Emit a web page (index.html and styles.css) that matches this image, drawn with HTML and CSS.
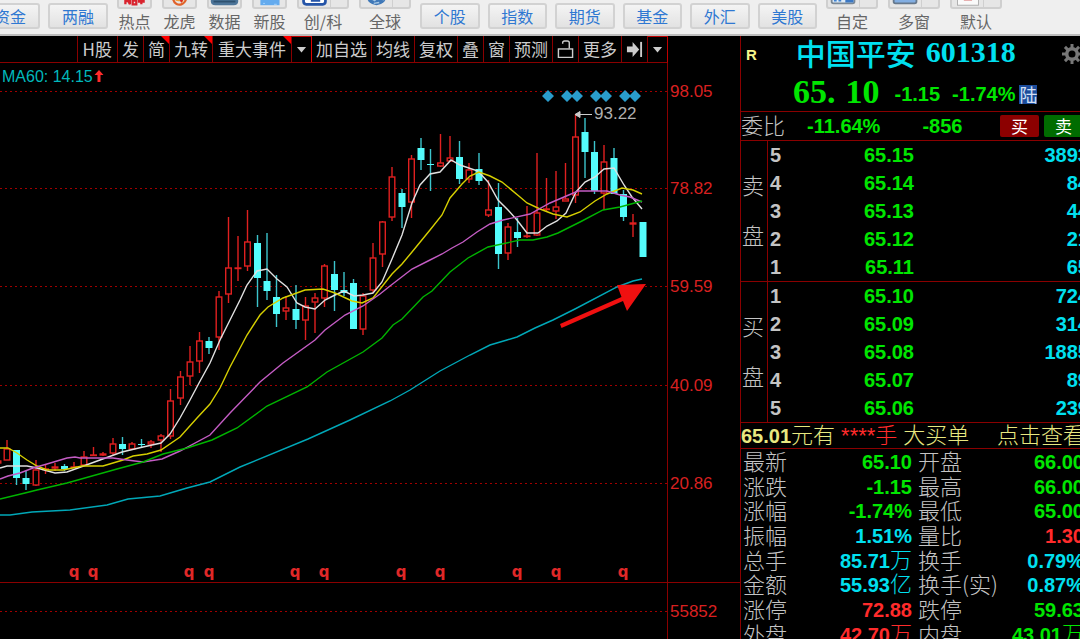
FILE: index.html
```html
<!DOCTYPE html>
<html lang="zh-CN">
<head>
<meta charset="utf-8">
<title>中国平安 601318</title>
<link rel="stylesheet" href="styles.css">
</head>
<body>
<header class="toolbar">
  <div class="group group-start">
    <button class="box-btn">资金</button>
    <button class="box-btn">两融</button>
  </div>
  <div class="group icons">
    <button class="tool"><span class="tile"><svg viewBox="0 0 34 24"><path d="M7 13v7M7 16.500h4M12 13v7l-2-4M15 13v7h4v-7h-4v3h4M22 13v4h5v-4M24.500 13v7" fill="none" stroke="#d9232e" stroke-width="2.500"/></svg></span>热点</button>
    <button class="tool"><span class="tile"><svg viewBox="0 0 34 24"><path d="M10 14c1 6 6 7 9 6s5-4 5-6" fill="none" stroke="#e0622a" stroke-width="2.500"/><path d="M13 15c3 2 5-1 8 2" fill="none" stroke="#f2a03a" stroke-width="2"/><path d="M17 13l2 4 2-3" fill="none" stroke="#d62828" stroke-width="1.500"/></svg></span>龙虎</button>
    <button class="tool"><span class="tile"><svg viewBox="0 0 34 24"><path d="M2 14h30v3q0 4-5 4H7q-5 0-5-4z" fill="#4d7599"/><path d="M5 17h24" stroke="#2f5270" stroke-width="2"/></svg></span>数据</button>
    <button class="tool"><span class="tile"><svg viewBox="0 0 34 24"><rect x="7" y="4" width="21" height="17" fill="#64abee"/><path d="M10 19h2M22 20h3" stroke="#a7d5ff"/></svg></span>新股</button>
    <button class="tool"><span class="tile split"><svg viewBox="0 0 34 24"><rect x="5" y="4" width="24" height="16" rx="3" fill="#fff" stroke="#2454a8" stroke-width="3"/><path d="M13 16h9v-4" fill="none" stroke="#2454a8" stroke-width="2.500"/></svg></span>创/科</button>
    <button class="tool"><span class="tile split"><svg viewBox="0 0 34 24"><circle cx="17" cy="10" r="11" fill="#3f78b8"/><path d="M10 13l5 3 3-3 7 2M14 19l6-1" fill="none" stroke="#a8c8e4" stroke-width="1.500"/></svg></span>全球</button>
  </div>
  <div class="group boxes">
    <button class="box-btn">个股</button>
    <button class="box-btn">指数</button>
    <button class="box-btn">期货</button>
    <button class="box-btn">基金</button>
    <button class="box-btn">外汇</button>
    <button class="box-btn">美股</button>
  </div>
  <div class="group icons">
    <button class="tool"><span class="tile split"><svg viewBox="0 0 34 24"><rect x="4" y="4" width="25" height="15" rx="2" fill="#dceaf7" stroke="#7a8794" stroke-width="2"/><path d="M8 17v-4M13 17v-2" stroke="#3f82d0" stroke-width="3"/><rect x="19" y="10" width="9" height="8" fill="#3b78c4"/></svg></span>自定</button>
    <button class="tool"><span class="tile split"><svg viewBox="0 0 34 24"><rect x="4" y="4" width="25" height="15" rx="2" fill="#82aee2" stroke="#66788c" stroke-width="2"/></svg></span>多窗</button>
    <button class="tool"><span class="tile split"><svg viewBox="0 0 34 24"><rect x="6" y="2" width="23" height="19" fill="#fafafa" stroke="#aaa"/><path d="M13 15h9" stroke="#d88" stroke-width="2"/></svg></span>默认</button>
  </div>
</header>

<main class="workspace">
  <section class="chart-pane">
    <nav class="menu">
      <button class="roomy">H股</button>
      <button>发</button>
      <button class="flag">简</button>
      <button class="flag">九转</button>
      <button class="flag roomy">重大事件</button>
      <button class="drop" aria-label="更多事件"><svg viewBox="0 0 12 8"><path d="M1 1h10l-5 6z"/></svg></button>
      <button class="after-drop">加自选</button>
      <button>均线</button>
      <button>复权</button>
      <button>叠</button>
      <button>窗</button>
      <button>预测</button>
      <button class="glyph" aria-label="解锁"><svg viewBox="0 0 18 20"><rect x="1.500" y="9.500" width="15" height="9" fill="none" stroke="#ccc" stroke-width="1.500"/><path d="M6 4V3q0-2 2-2h3q2 0 2 2v6" fill="none" stroke="#ccc" stroke-width="1.500"/></svg></button>
      <button>更多</button>
      <button class="glyph" aria-label="跳到最新"><svg viewBox="0 0 18 20"><path d="M1 7h6V2l7 8-7 8v-5H1z"/><path d="M15 2h2v16h-2z"/></svg></button>
      <button class="drop" aria-label="菜单"><svg viewBox="0 0 12 8"><path d="M1 1h10l-5 6z"/></svg></button>
    </nav>
    <svg class="chart" viewBox="0 63 740 576" role="img" aria-label="日K线图">
      <path class="grid" d="M0 91.500H667M0 188.500H667M0 286.500H667M0 385.500H667M0 483.500H667M0 611.500H667"/>
      <path class="frame" d="M0 582.500H740M667.500 63V639"/>
      <g id="candles"></g>
      <polyline class="ma ma5" points="0,468 7,466 27,466 37,468 55,473 67,472 78,468 100,460 122,452 143,447 161,443 170,434 180,418 190,400 199,383 210,363 220,340 230,320 240,300 247,285 257,271 267,269 277,279 287,287 297,303 305,307 315,309 325,300 335,295 344,291 354,296 363,295 373,293 382,282 392,259 402,235 412,203 420,185 430,174 440,172 451,160 460,165 478,171 488,182 498,200 508,210 517,220 527,233 538,233 547,226 557,221 566,213 576,192 585,182 595,177 604,169 614,168 624,185 632,197 642,209"/>
      <polyline class="ma ma10" points="0,448 8,448 17,453 27,460 37,466 47,470 63,470 82,466 103,466 123,460 133,456 147,454 161,450 180,437 197,418 210,404 220,388 230,367 247,335 260,315 268,307 283,298 305,290 323,289 335,293 352,301 362,303 373,298 392,274 402,264 412,252 430,230 442,215 450,198 462,184 470,176 479,172 490,176 502,182 520,197 527,203 540,209 553,214 567,217 580,212 595,201 607,194 622,188 633,190 642,194"/>
      <polyline class="ma ma20" points="0,479 8,476 20,473 33,468 47,464 67,458 75,457 80,458 113,458 127,460 143,462 162,459 180,451 210,435 230,413 260,382 283,363 315,340 325,330 345,315 363,306 380,294 390,286 412,269 430,260 442,254 452,248 463,242 477,232 490,224 503,220 530,214 550,203 578,191 607,191 620,195 630,197 642,202"/>
      <polyline class="ma ma30" points="0,499 25,493 37,490 67,483 117,469 143,462 163,454 187,448 212,440 237,428 267,406 307,387 327,372 363,352 382,338 393,325 402,319 423,297 432,291 450,272 468,258 488,247 520,240 533,240 547,237 558,233 580,222 603,210 620,207 642,201"/>
      <polyline class="ma ma60" points="0,515 10,515 32,512 70,510 107,505 128,499 160,496 187,488 210,482 240,467 308,439 350,420 390,401 410,390 440,371 470,355 490,345 507,340 517,337 535,328 553,320 575,309 617,287 633,281 642,279"/>
      <path class="diamonds" d="M542 96l6-6 6 6-6 6zM561 96l6-6 5 5 5-5 6 6-6 6-5-5-5 5zM590 96l6-6 5 5 5-5 6 6-6 6-5-5-5 5zM619 96l6-6 5 5 5-5 6 6-6 6-5-5-5 5z"/>
      <path class="peak" d="M576 114.500h16M575 114.500l5-3v6z"/>
      <path class="arrow" d="M560 324l61.500-27-4.500-12 29-1-19 27-4-10-61.500 27z"/>
      <text class="num peak-label" x="594" y="119">93.22</text>
      <text class="num ma-label" x="2" y="82">MA60: 14.15</text>
      <path class="up" d="M99 70l4.500 5h-3v7h-3v-7h-3z"/>
      <g class="num axis">
        <text x="670" y="97">98.05</text>
        <text x="670" y="194">78.82</text>
        <text x="670" y="292">59.59</text>
        <text x="670" y="391">40.09</text>
        <text x="670" y="489">20.86</text>
        <text x="670" y="617">55852</text>
      </g>
      <g class="marks">
        <text x="74" y="577">q</text><text x="93" y="577">q</text><text x="189" y="577">q</text><text x="209" y="577">q</text><text x="295" y="577">q</text><text x="324" y="577">q</text><text x="401" y="577">q</text><text x="440" y="577">q</text><text x="517" y="577">q</text><text x="556" y="577">q</text><text x="623" y="577">q</text>
      </g>
    </svg>
  </section>

  <aside class="quote">
    <div class="quote-inner">
      <div class="title">
        <span class="badge-r">R</span>
        <h1><span>中国平安</span><span class="code">601318</span></h1>
        <button class="gear" aria-label="设置"><svg viewBox="0 0 20 20"><g fill="#777"><circle cx="10" cy="10" r="7"/><path d="M8.500 0h3v20h-3zM0 8.500h20v3H0z"/><path d="M8.500 0h3v20h-3zM0 8.500h20v3H0z" transform="rotate(45 10 10)"/></g><circle cx="10" cy="10" r="3.500"/></svg></button>
      </div>
      <div class="last">
        <strong class="price"><span>65.</span><span>10</span></strong>
        <span>-1.15</span>
        <span class="pct">-1.74%</span>
        <span class="lu">陆</span>
      </div>
      <div class="ratio">
        <span class="cn">委比</span>
        <span class="ratio-pct">-11.64%</span>
        <span class="ratio-vol">-856</span>
        <button class="buy">买</button>
        <button class="sell">卖</button>
      </div>
      <div class="book">
        <div class="side"><span>卖</span><span>盘</span></div>
        <table>
          <tr><th>5</th><td>65.15</td><td>3893</td></tr>
          <tr><th>4</th><td>65.14</td><td>84</td></tr>
          <tr><th>3</th><td>65.13</td><td>44</td></tr>
          <tr><th>2</th><td>65.12</td><td>21</td></tr>
          <tr><th>1</th><td>65.11</td><td>65</td></tr>
        </table>
      </div>
      <div class="book">
        <div class="side"><span>买</span><span>盘</span></div>
        <table>
          <tr><th>1</th><td>65.10</td><td>724</td></tr>
          <tr><th>2</th><td>65.09</td><td>314</td></tr>
          <tr><th>3</th><td>65.08</td><td>1885</td></tr>
          <tr><th>4</th><td>65.07</td><td>89</td></tr>
          <tr><th>5</th><td>65.06</td><td>239</td></tr>
        </table>
      </div>
      <div class="notice">
        <span><b>65.01</b>元有</span>
        <span class="stars">****手</span>
        <span>大买单</span>
        <a href="#detail">点击查看</a>
      </div>
      <table class="stats" id="detail">
        <tr><th>最新</th><td class="g">65.10</td><th>开盘</th><td class="g">66.00</td></tr>
        <tr><th>涨跌</th><td class="g">-1.15</td><th>最高</th><td class="g">66.00</td></tr>
        <tr><th>涨幅</th><td class="g">-1.74%</td><th>最低</th><td class="g">65.00</td></tr>
        <tr><th>振幅</th><td class="c">1.51%</td><th>量比</th><td class="r">1.30</td></tr>
        <tr><th>总手</th><td class="c">85.71<i>万</i></td><th>换手</th><td class="c">0.79%</td></tr>
        <tr><th>金额</th><td class="c">55.93<i>亿</i></td><th>换手(实)</th><td class="c">0.87%</td></tr>
        <tr><th>涨停</th><td class="r">72.88</td><th>跌停</th><td class="g">59.63</td></tr>
        <tr><th>外盘</th><td class="r">42.70<i>万</i></td><th>内盘</th><td class="g">43.01<i>万</i></td></tr>
      </table>
    </div>
  </aside>
</main>
<script src="chart.js"></script>
</body>
</html>
```

FILE: styles.css
```css
:root {
  --red-line: #8a0000;
  --green: #00e600;
  --cyan: #00e0f0;
  --red: #ff2b2b;
  --grey: #c4c4c4;
  --cn: "Noto Sans CJK SC", sans-serif;
  --num: "Liberation Sans", "Noto Sans CJK SC", sans-serif;
}

* { box-sizing: border-box; }

html, body { height: 100%; }

body {
  margin: 0;
  display: flex;
  flex-direction: column;
  overflow: hidden;
  background: #000;
  color: var(--grey);
  font-family: var(--cn);
}

button {
  margin: 0;
  padding: 0;
  border: 0;
  background: none;
  color: inherit;
  font: inherit;
  white-space: nowrap;
}

/* top toolbar */
.toolbar {
  flex: none;
  display: flex;
  gap: 9px;
  height: 36px;
  overflow: hidden;
  background: #efefef;
  border-bottom: 2px solid #bdbdbd;
}

.group { flex: none; display: flex; gap: 8px; }
.group-start { margin-left: -20px; }
.boxes { width: 397px; }
.icons { gap: 10px; align-items: flex-end; }

.box-btn {
  flex: 1 0 auto;
  min-width: 59px;
  height: 26px;
  margin-top: 3px;
  border: 2px solid #d2d2d2;
  border-radius: 3px;
  background: linear-gradient(#f4f4f4, #e2e2e2);
  color: #2f78d2;
  font-size: 16px;
  line-height: 22px;
}
.group-start .box-btn { width: 60px; }

.tool {
  display: flex;
  flex-direction: column;
  align-items: center;
  color: #666;
  font-size: 16px;
  line-height: 24px;
  padding-bottom: 1px;
}
.tile {
  display: flex;
  width: 35px;
  height: 25px;
  border: 2px solid #cfcfcf;
  border-radius: 3px;
  background: #e6e6e6;
}
.tile svg { width: 31px; height: 22px; }
.tile.split { width: 52px; }
.tile.split svg { width: 32px; border-right: 1px solid #cfcfcf; }

/* layout */
.workspace { flex: 1; min-height: 0; display: flex; }
.chart-pane { flex: 1; min-width: 0; }

/* chart menu */
.menu {
  display: flex;
  justify-content: flex-end;
  height: 27px;
  margin-right: 72px;
  border-bottom: 1px solid var(--red-line);
  border-right: 1px solid #c00000;
}
.menu button {
  flex: none;
  position: relative;
  padding: 0 4px;
  border-left: 1px solid var(--red-line);
  color: #ccc;
  font-size: 17px;
  line-height: 26px;
}
.menu .roomy { padding: 0 5px; }
.menu .drop { width: 20px; border-top: 1px solid #c00000; }
.menu .after-drop { border-left-color: #e00000; }
.menu svg { display: block; fill: #ccc; }
.menu .drop svg { width: 11px; }
.menu .glyph svg { width: 17px; }
.menu .flag::after {
  content: "";
  position: absolute;
  top: 0;
  right: 0;
  border: 4px solid transparent;
  border-top-color: #f00;
  border-right-color: #f00;
}

/* chart */
.chart { display: block; width: 100%; height: auto; }
.grid { stroke: #a00000; stroke-width: 1; stroke-dasharray: 2 3; }
.frame { stroke: var(--red-line); fill: none; }
.ma { fill: none; stroke-width: 1.4; }
.ma5 { stroke: #e0e0e0; }
.ma10 { stroke: #d6cf00; }
.ma20 { stroke: #c45cc4; }
.ma30 { stroke: #00b400; }
.ma60 { stroke: #00a8b8; }
.up-wick { stroke: #e02020; stroke-width: 1.4; }
.up-body { stroke: #e02020; stroke-width: 1.4; fill: #000; }
.down-wick { stroke: #3cc4cc; stroke-width: 1.4; }
.down-body { fill: #54fcfc; }
.diamonds { fill: #2a9ccc; }
.peak { stroke: #ccc; fill: #ccc; }
.arrow { fill: #f01010; }
.up { fill: var(--red); }
.num { font-family: var(--num); font-size: 17px; }
.peak-label { fill: #b0b0b0; }
.ma-label { fill: #00b8bc; font-size: 16px; }
.axis { fill: #d82020; }
.marks { fill: #e02828; font: bold 15px "DejaVu Sans", sans-serif; text-anchor: middle; }

/* quote panel */
.quote {
  flex: none;
  width: 340px;
  overflow: hidden;
  border-left: 1px solid var(--red-line);
  font-family: var(--num);
  font-size: 20px;
}
.quote-inner { width: 348px; }

.title {
  display: flex;
  align-items: center;
  height: 36px;
  padding-left: 5px;
}
.badge-r { color: #f5f58a; font-size: 15px; font-weight: bold; }
.title h1 {
  display: flex;
  align-items: center;
  gap: 10px;
  margin: 0 0 0 39px;
  color: var(--cyan);
  font: 500 30px/36px var(--cn);
}
.title h1 span { margin-top: -4px; }
.title h1 .code { font: bold 30px/36px "Liberation Serif", serif; }
.gear { margin-left: auto; margin-right: 7px; }
.gear svg { display: block; width: 20px; }

.last {
  display: flex;
  align-items: center;
  height: 39px;
  padding-left: 52px;
  color: var(--green);
  font-weight: bold;
}
.last > span { margin-top: 6px; }
.price {
  display: flex;
  gap: 10px;
  margin-right: 15px;
  font: bold 34px/39px "Liberation Serif", serif;
}
.last .pct { margin-left: 12px; }
.last .lu {
  margin-left: 4px;
  background: #1c4c9c;
  color: #d4e0f4;
  font: 400 18px/19px var(--cn);
}

.ratio {
  display: flex;
  align-items: center;
  height: 30px;
  border-top: 1px solid var(--red-line);
  border-bottom: 1px solid var(--red-line);
  color: var(--green);
  font-weight: bold;
}
.ratio .cn { padding-bottom: 3px; color: var(--grey); font: 300 22px/25px var(--cn); }
.ratio-pct { margin-left: 22px; }
.ratio-vol { margin-left: 42px; }
.ratio button {
  width: 39px;
  height: 22px;
  border-radius: 2px;
  color: #fff;
  font: 400 17px/22px var(--cn);
}
.ratio .buy { margin-left: auto; background: #8c0000; }
.ratio .sell { margin: 0 6px 0 5px; background: #006c00; }

.book { display: flex; border-bottom: 1px solid var(--red-line); }
.side {
  flex: none;
  display: flex;
  flex-direction: column;
  justify-content: center;
  gap: 22px;
  width: 27px;
  padding: 0 0 4px 1px;
  border-right: 1px solid var(--red-line);
  font: 300 22px/28px var(--cn);
}
table { width: 100%; border-collapse: collapse; }
th, td { padding: 0; font-weight: bold; line-height: 28px; }
.book tr { height: 28px; }
.book th { width: 30px; padding-left: 2px; text-align: left; }
.book td { width: 116px; color: var(--green); text-align: right; }
.book td:last-child { width: auto; color: var(--cyan); }

.notice {
  display: flex;
  align-items: center;
  height: 26px;
  border-bottom: 1px solid var(--red-line);
  color: #e8e880;
  font: 300 22px/25px var(--num);
  white-space: nowrap;
}
.notice b { font-size: 20px; font-weight: 700; }
.notice .stars { margin: 0 6px; color: var(--red); }
.notice a { margin-left: auto; margin-right: 4px; color: inherit; text-decoration: none; }

.stats { width: 343px; table-layout: fixed; }
.stats tr { height: 25px; }
.stats tr:nth-child(3n) { height: 24px; }
.stats th, .stats td { line-height: 24px; white-space: nowrap; }
.stats th {
  width: 48px;
  padding: 0 0 4px 2px;
  font: 300 22px/20px var(--cn);
  text-align: left;
}
.stats th:nth-child(3) { padding-left: 6px; width: 84px; }
.stats td { text-align: right; }
.stats td:nth-child(2) { width: 123px; }
.stats i { font: 300 22px/16px var(--cn); }
.g { color: var(--green); }
.c { color: var(--cyan); }
.r { color: var(--red); }
```

FILE: chart.js
```javascript
// [centre x, high, low, body top, body bottom, direction]
const candles = [
  [-2, 461, 463, 461, 463, 1], [7, 440, 460, 449, 460, 1], [16.5, 450, 485, 450, 478, 0], [26, 471, 490, 478, 484, 0],
  [36, 460, 486, 470, 485, 1], [45.5, 465, 474, 469, 469, 1], [55, 463, 471, 467, 468, 1],
  [64.5, 464, 471, 466, 469, 0], [74, 462, 468, 467, 467, 1], [84, 451, 465, 457, 465, 1],
  [93.5, 447, 456, 455, 455, 1], [103, 452, 456, 454, 455, 1], [113, 438, 455, 444, 453, 1],
  [122.5, 437, 455, 444, 449, 0], [132, 442, 450, 444, 449, 1], [141.5, 439, 447, 444, 445, 0],
  [151, 440, 448, 442, 444, 1], [161, 434, 452, 436, 440, 1], [170.5, 389, 439, 401, 436, 1],
  [180.5, 371, 405, 377, 398, 1], [190, 346, 385, 362, 376, 1], [199.5, 332, 373, 341, 361, 1],
  [209, 337, 354, 341, 348, 0], [219, 291, 350, 297, 337, 1], [228.5, 217, 303, 268, 294, 1],
  [238, 236, 281, 268, 268, 1], [247.5, 210, 271, 242, 266, 1], [257.5, 235, 307, 243, 278, 0],
  [267, 233, 300, 281, 291, 0], [276.5, 275, 327, 297, 314, 0], [286, 296, 320, 308, 311, 1],
  [296, 285, 329, 309, 320, 0], [305.5, 297, 340, 306, 320, 1], [315, 293, 333, 298, 302, 1],
  [324.5, 264, 307, 266, 298, 1], [334.5, 261, 311, 274, 290, 0], [344, 272, 296, 290, 293, 0],
  [353.5, 279, 329, 283, 329, 0], [363, 293, 335, 296, 329, 1], [373, 243, 293, 258, 290, 1],
  [382.5, 221, 267, 222, 254, 1], [392, 167, 221, 177, 217, 1], [402, 189, 228, 193, 207, 0],
  [411.5, 155, 218, 159, 202, 1], [421, 138, 170, 148, 160, 0], [430.5, 149, 191, 164, 165, 0],
  [440.5, 134, 167, 163, 166, 1], [450, 136, 161, 158, 161, 1], [459.5, 141, 184, 157, 179, 0],
  [469, 163, 183, 170, 179, 1], [479, 153, 185, 169, 181, 0], [488.5, 180, 217, 210, 215, 1],
  [498.5, 183, 269, 207, 254, 0], [508, 223, 260, 227, 253, 1], [517.5, 218, 247, 232, 238, 0],
  [527, 206, 238, 236, 236, 1], [537, 153, 236, 213, 235, 1], [546.5, 178, 212, 209, 209, 1],
  [556, 171, 219, 207, 211, 1], [565.5, 163, 201, 199, 201, 1], [575.5, 114, 203, 137, 195, 1],
  [585, 118, 178, 132, 152, 0], [594.5, 141, 194, 152, 191, 0], [604, 145, 210, 162, 193, 1],
  [614, 148, 194, 158, 194, 0], [623.5, 190, 221, 194, 217, 0], [633, 214, 237, 223, 224, 1],
  [643, 222, 257, 222, 257, 0]
];

const NS = "http://www.w3.org/2000/svg";
const layer = document.getElementById("candles");

function add(name, attrs) {
  const node = document.createElementNS(NS, name);
  for (const key in attrs) node.setAttribute(key, attrs[key]);
  layer.appendChild(node);
}

for (const [x, high, low, top, bottom, up] of candles) {
  add("line", { class: up ? "up-wick" : "down-wick", x1: x, x2: x, y1: high, y2: low });
  const half = up ? 2.8 : 3.5;
  add("rect", { class: up ? "up-body" : "down-body", x: x - half, y: top, width: half * 2, height: Math.max(bottom - top, 0.5) });
}
```
